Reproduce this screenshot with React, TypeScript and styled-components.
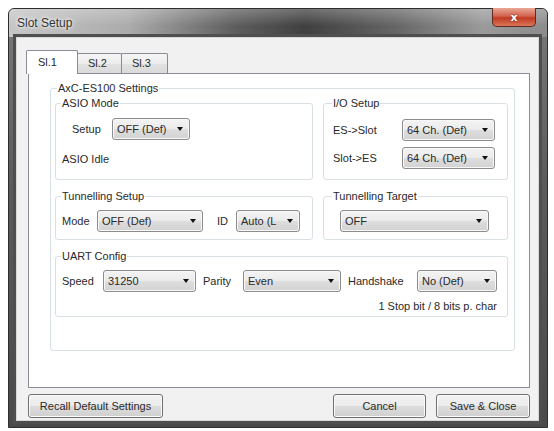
import React from 'react'
import styled, { createGlobalStyle } from 'styled-components'

const GlobalStyle = createGlobalStyle`
  html, body {
    margin: 0;
    padding: 0;
    background: #fff;
  }
  body {
    font-family: "Liberation Sans", Arial, sans-serif;
    font-size: 11px;
    color: #2a2a2a;
  }
`

const Page = styled.div`
  width: 554px;
  height: 431px;
  box-sizing: border-box;
  padding: 8px 6px 3px 8px;
`

const Window = styled.div`
  height: 420px;
  box-sizing: border-box;
  display: flex;
  flex-direction: column;
  border: 1px solid #2e2e2e;
  border-radius: 6px 6px 0 0;
  padding: 0 8px 6px 7px;
  background: linear-gradient(180deg, #7a7a7a 0%, #5c5c5c 40%, #4a4a4a 100%);
`

const TitleBar = styled.div`
  height: 28px;
  margin: 0 -8px 0 -7px;
  padding-left: 8px;
  display: flex;
  align-items: center;
  border-radius: 5px 5px 0 0;
  background:
    linear-gradient(180deg, rgba(255, 255, 255, 0.25), rgba(255, 255, 255, 0) 60%),
    linear-gradient(90deg, #c6c6c6 0%, #acacac 22%, #5e5e5e 42%, #404040 55%, #666 72%, #9a9a9a 88%, #8c8c8c 100%);
`

const Title = styled.span`
  font-size: 12px;
  color: #333;
  text-shadow: 0 0 6px #fff, 0 0 3px #fff;
`

const CloseButton = styled.div`
  margin-left: auto;
  margin-right: 11px;
  align-self: flex-start;
  margin-top: -1px;
  width: 44px;
  height: 19px;
  box-sizing: border-box;
  display: flex;
  align-items: center;
  justify-content: center;
  border: 1px solid #5e2a22;
  border-top: none;
  border-radius: 0 0 5px 5px;
  background: linear-gradient(180deg, #e9a895 0%, #d2634d 45%, #c13a22 55%, #d9765a 100%);
  color: #fff;
  font-family: "DejaVu Sans", sans-serif;
  font-weight: bold;
  font-size: 11px;
  text-shadow: 0 0 2px #7a1a0a;
`

const Client = styled.div`
  flex: 1;
  display: flex;
  flex-direction: column;
  border: 1px solid #d8d8d8;
  box-shadow: 0 0 0 3px #4f4f4f;
  background: #f1f1f1;
  padding: 12px 8px 2px 11px;
`

const TabRow = styled.div`
  display: flex;
  align-items: flex-end;
  height: 23px;
  margin-left: -2px;
  position: relative;
  z-index: 1;
`

const Tab = styled.div<{ $active?: boolean; $w: number }>`
  box-sizing: border-box;
  width: ${({ $w }) => $w}px;
  border: 1px solid #898c95;
  border-bottom: none;
  border-radius: 2px 2px 0 0;
  line-height: 13px;
  ${({ $active }) => $active ? `
    height: 24px;
    margin-bottom: -1px;
    background: #fff;
    padding: 5px 0 0 11px;
  ` : `
    height: 20px;
    margin-left: -1px;
    background: linear-gradient(180deg, #f6f6f6, #ececec 50%, #e2e2e2 51%, #dadada);
    padding: 3px 0 0 10px;
  `}
`

const TabPanel = styled.div`
  flex: 1;
  box-sizing: border-box;
  background: #fff;
  border: 1px solid #898c95;
  padding: 8px 14px 0 21px;
`

const Group = styled.fieldset<{ $left?: number; $right?: number; $bottom?: number }>`
  margin: 0;
  min-width: 0;
  border: 1px solid #d9e0e4;
  border-radius: 3px;
  padding: 0 ${({ $right }) => $right ?? 6}px ${({ $bottom }) => $bottom ?? 0}px ${({ $left }) => $left ?? 6}px;
`

const Legend = styled.legend<{ $shift?: number }>`
  padding: 0 1px;
  margin-left: ${({ $shift }) => $shift ?? -1}px;
  line-height: 13px;
  font-size: 11px;
`

const Sections = styled.div`
  display: grid;
  grid-template-columns: 258px 185px;
  column-gap: 10px;
  row-gap: 10px;
  padding-top: 2px;
`

const Wide = styled.div`
  grid-column: 1 / span 2;
`

const Row = styled.div<{ $top?: number; $indent?: number }>`
  display: flex;
  align-items: center;
  margin-top: ${({ $top }) => $top ?? 0}px;
  padding-left: ${({ $indent }) => $indent ?? 0}px;
`

const Label = styled.span<{ $w?: number; $gap?: number }>`
  ${({ $w }) => $w ? `width: ${$w}px;` : ''}
  margin-left: ${({ $gap }) => $gap ?? 0}px;
  flex-shrink: 0;
  white-space: nowrap;
  line-height: 13px;
`

const Status = styled.div<{ $top: number; $right?: boolean }>`
  margin-top: ${({ $top }) => $top}px;
  line-height: 13px;
  text-align: ${({ $right }) => $right ? 'right' : 'left'};
`

const Combo = styled.div<{ $w: number }>`
  box-sizing: border-box;
  width: ${({ $w }) => $w}px;
  height: 22px;
  flex-shrink: 0;
  display: flex;
  align-items: center;
  padding: 0 6px 0 4px;
  border: 1px solid #8c8c8c;
  border-radius: 3px;
  box-shadow: inset 0 0 0 1px #f8f8f8;
  background: linear-gradient(180deg, #f3f3f3, #ebebeb 50%, #dedede 51%, #d2d2d2);
`

const ComboText = styled.span`
  flex: 1;
  overflow: hidden;
  white-space: nowrap;
  line-height: 13px;
`

const Arrow = styled.span`
  width: 0;
  height: 0;
  margin-left: 4px;
  border-left: 3.5px solid transparent;
  border-right: 3.5px solid transparent;
  border-top: 4px solid #111;
  flex-shrink: 0;
`

const ButtonRow = styled.div`
  display: flex;
  justify-content: space-between;
  margin-top: 6px;
`

const ButtonGroup = styled.div`
  display: flex;
  gap: 10px;
`

const Button = styled.div<{ $w: number }>`
  box-sizing: border-box;
  width: ${({ $w }) => $w}px;
  height: 24px;
  display: flex;
  align-items: center;
  justify-content: center;
  border: 1px solid #707070;
  border-radius: 3px;
  box-shadow: inset 0 0 0 1px #fbfbfb;
  background: linear-gradient(180deg, #f2f2f2, #ebebeb 50%, #dddddd 51%, #cfcfcf);
`

const Select = ({ value, width }: { value: string; width: number }) => (
  <Combo $w={width}>
    <ComboText>{value}</ComboText>
    <Arrow />
  </Combo>
)

export default function App() {
  return (
    <Page>
      <GlobalStyle />
      <Window>
        <TitleBar>
          <Title>Slot Setup</Title>
          <CloseButton>x</CloseButton>
        </TitleBar>
        <Client>
          <TabRow>
            <Tab $active $w={52}>Sl.1</Tab>
            <Tab $w={45}>Sl.2</Tab>
            <Tab $w={47}>Sl.3</Tab>
          </TabRow>
          <TabPanel>
            <Group $left={4} $right={6} $bottom={33}>
              <Legend $shift={2}>AxC-ES100 Settings</Legend>
              <Sections>
                <Group $bottom={13}>
                  <Legend>ASIO Mode</Legend>
                  <Row $top={8} $indent={10}>
                    <Label $w={40}>Setup</Label>
                    <Select value="OFF (Def)" width={78} />
                  </Row>
                  <Status $top={13}>ASIO Idle</Status>
                </Group>
                <Group $left={9} $bottom={10}>
                  <Legend>I/O Setup</Legend>
                  <Row $top={9}>
                    <Label $w={69}>ES-&gt;Slot</Label>
                    <Select value="64 Ch. (Def)" width={93} />
                  </Row>
                  <Row $top={6}>
                    <Label $w={69}>Slot-&gt;ES</Label>
                    <Select value="64 Ch. (Def)" width={93} />
                  </Row>
                </Group>
                <Group $bottom={7}>
                  <Legend>Tunnelling Setup</Legend>
                  <Row $top={7}>
                    <Label $w={35}>Mode</Label>
                    <Select value="OFF (Def)" width={106} />
                    <Label $w={19} $gap={14}>ID</Label>
                    <Select value="Auto (L" width={64} />
                  </Row>
                </Group>
                <Group $left={9} $bottom={7}>
                  <Legend>Tunnelling Target</Legend>
                  <Row $top={7} $indent={7}>
                    <Select value="OFF" width={149} />
                  </Row>
                </Group>
                <Wide>
                  <Group $right={10} $bottom={3}>
                    <Legend>UART Config</Legend>
                    <Row $top={7}>
                      <Label $w={41}>Speed</Label>
                      <Select value="31250" width={93} />
                      <Label $w={40} $gap={7}>Parity</Label>
                      <Select value="Even" width={98} />
                      <Label $w={69} $gap={7}>Handshake</Label>
                      <Select value="No (Def)" width={80} />
                    </Row>
                    <Status $top={8} $right>1 Stop bit / 8 bits p. char</Status>
                  </Group>
                </Wide>
              </Sections>
            </Group>
          </TabPanel>
          <ButtonRow>
            <Button $w={135}>Recall Default Settings</Button>
            <ButtonGroup>
              <Button $w={93}>Cancel</Button>
              <Button $w={94}>Save &amp; Close</Button>
            </ButtonGroup>
          </ButtonRow>
        </Client>
      </Window>
    </Page>
  )
}
